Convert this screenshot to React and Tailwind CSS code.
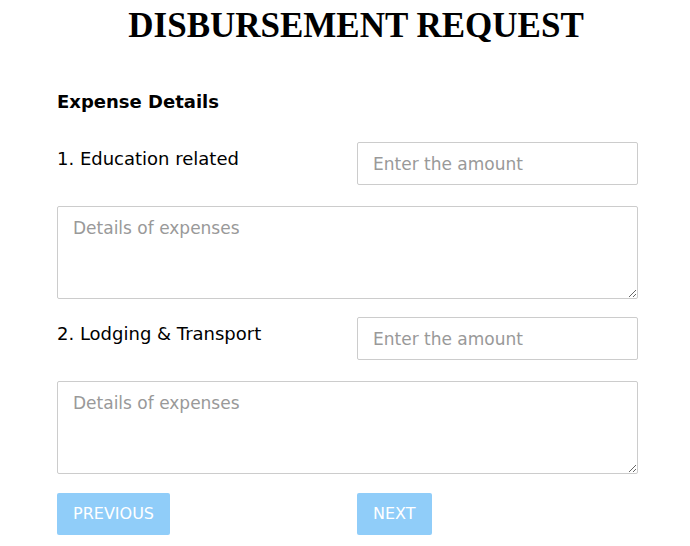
import React from 'react';

const sans = { fontFamily: '"DejaVu Sans", "Noto Sans", sans-serif' };

const ExpenseRow = ({ label }) => (
    <>
        <div className="pt-[4px] text-[18px] text-black leading-[26px]">{label}</div>
        <input
            type="text"
            placeholder="Enter the amount"
            className="mb-[3px] h-[43px] w-full border border-[#cccccc] rounded-[2px] px-[15px] text-[17px] text-black placeholder:text-[#999999] outline-none"
        />
        <textarea
            placeholder="Details of expenses"
            className="col-span-2 block h-[93px] w-full border border-[#cccccc] rounded-[2px] px-[15px] py-[9px] text-[17px] text-black placeholder:text-[#999999] outline-none"
        />
    </>
);

const App = () => {
    return (
        <div className="min-h-screen bg-white" style={sans}>
            <h1
                className="pt-[6px] pl-[22px] text-center text-[35px] font-bold leading-[40px] text-black"
                style={{ fontFamily: '"Liberation Serif", "Times New Roman", serif' }}
            >
                DISBURSEMENT REQUEST
            </h1>

            <div className="px-[57px] pt-[44px]">
                <h2 className="text-[18px] font-bold leading-[24px] text-black">Expense Details</h2>

                <div className="mt-[28px] grid grid-cols-[300px_281px] gap-y-[18px]">
                    <ExpenseRow label="1. Education related" />
                    <ExpenseRow label="2. Lodging & Transport" />

                    <div className="pt-[1px]">
                        <button className="h-[42px] rounded-[2px] bg-[#90cdf9] px-[16px] text-[16px] text-white">PREVIOUS</button>
                    </div>
                    <div className="pt-[1px]">
                        <button className="h-[42px] rounded-[2px] bg-[#90cdf9] px-[16px] text-[16px] text-white">NEXT</button>
                    </div>
                </div>
            </div>
        </div>
    );
};

export default App;
